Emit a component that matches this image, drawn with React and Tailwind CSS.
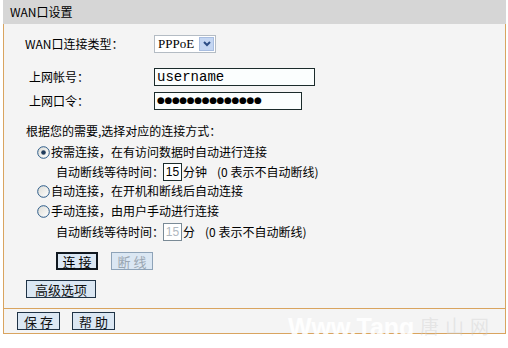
import React from 'react';

const font = { fontFamily: '"Noto Sans CJK SC", "Liberation Sans", sans-serif' };

const Radio = ({ checked }) => (
    <svg width="13" height="13" viewBox="0 0 13 13" className="shrink-0">
        <defs>
            <linearGradient id="rg" x1="0" y1="0" x2="1" y2="1">
                <stop offset="0" stopColor="#dcdcd6" />
                <stop offset="1" stopColor="#ffffff" />
            </linearGradient>
        </defs>
        <circle cx="6.5" cy="6.5" r="5.8" fill="url(#rg)" stroke="#2a5a88" strokeWidth="1" />
        {checked && <circle cx="6.5" cy="6.5" r="2.3" fill="#1f3b5c" />}
    </svg>
);

const Btn = ({ children, w, focus, disabled }) => (
    <div
        className={`flex items-center justify-center h-[18px] bg-[#dbe7f3] text-[13px] leading-none whitespace-nowrap ${focus ? 'border-2 border-[#101820]' : disabled ? 'border border-[#8ea3b8] text-[#9aa6b2]' : 'border border-[#1f3346] text-[#101010]'}`}
        style={{ width: w }}
    >
        {children}
    </div>
);

const Wait = ({ unit, disabled, mt }) => (
    <div className={`h-[18px] flex items-center pl-[52px] whitespace-nowrap ${mt}`}>
        <span className="w-[107px] shrink-0">自动断线等待时间：</span>
        <div
            className={`w-[19px] h-[18px] shrink-0 bg-white border flex items-center justify-center text-[12px] ${disabled ? 'border-[#7a8a96] text-[#b0b8c0]' : 'border-[#1b2b2b]'}`}
            style={{ fontFamily: '"Liberation Sans", sans-serif' }}
        >
            15
        </div>
        <span className="ml-[1px]">{unit}</span>
        <span className="ml-[10px]">(0 表示不自动断线)</span>
    </div>
);

export default function App() {
    return (
        <div className="w-[508px] h-[348px] bg-white relative overflow-hidden text-[12px] text-black" style={font}>
            <div className="ml-[3px] w-[503px]">
                {/* Header */}
                <div className="h-[24px] bg-[#d6d6d6] flex items-center pl-[7px] text-[12px]">
                    WAN口设置
                </div>

                {/* Body */}
                <div className="h-[284px] bg-[#f4f4f4] border-l border-r border-[#d9a45f] pt-[11px] whitespace-nowrap">
                    <div className="flex items-center h-[18px] pl-[21px]">
                        <div className="w-[129px] shrink-0">WAN口连接类型：</div>
                        <div className="w-[62px] h-[18px] bg-white border border-[#b4bcc4] flex items-center justify-between pl-[3px] pr-[1px]">
                            <span className="text-[13px]" style={{ fontFamily: '"Liberation Serif", serif' }}>PPPoE</span>
                            <div className="w-[15px] h-[14px] bg-[#c4d6f2] border border-[#a8bde0] flex items-center justify-center">
                                <svg width="8" height="6" viewBox="0 0 8 6"><path d="M1 1 L4 4 L7 1" fill="none" stroke="#2c4d85" strokeWidth="2" /></svg>
                            </div>
                        </div>
                    </div>

                    <div className="flex items-center h-[18px] pl-[25px] mt-[15px]">
                        <div className="w-[125px] shrink-0">上网帐号：</div>
                        <div className="w-[161px] h-[18px] bg-[#fbfefe] border border-[#1b2b2b] flex items-center pl-[2px] text-[14px]" style={{ fontFamily: '"Liberation Mono", monospace' }}>
                            username
                        </div>
                    </div>

                    <div className="flex items-center h-[18px] pl-[25px] mt-[6px]">
                        <div className="w-[125px] shrink-0">上网口令：</div>
                        <div className="w-[148px] h-[18px] bg-[#fbfefe] border border-[#1b2b2b] flex items-center pl-[2px] text-[9px] tracking-[-0.4px]" style={{ fontFamily: '"DejaVu Sans", sans-serif' }}>
                            ●●●●●●●●●●●●●●
                        </div>
                    </div>

                    <div className="h-[18px] flex items-center pl-[22px] mt-[12px]">根据您的需要,选择对应的连接方式：</div>

                    <div className="h-[18px] flex items-center pl-[33px] mt-[3px] gap-[1px]">
                        <Radio checked />
                        <span>按需连接，在有访问数据时自动进行连接</span>
                    </div>

                    <Wait unit="分钟" mt="mt-[2px]" />

                    <div className="h-[18px] flex items-center pl-[33px] mt-[1px] gap-[1px]">
                        <Radio />
                        <span>自动连接，在开机和断线后自动连接</span>
                    </div>

                    <div className="h-[18px] flex items-center pl-[33px] mt-[2px] gap-[1px]">
                        <Radio />
                        <span>手动连接，由用户手动进行连接</span>
                    </div>

                    <Wait unit="分" disabled mt="mt-[3px]" />

                    <div className="flex items-center pl-[52px] mt-[11px] gap-[13px]">
                        <Btn w={42} focus>连 接</Btn>
                        <Btn w={42} disabled>断 线</Btn>
                    </div>

                    <div className="pl-[22px] mt-[10px]">
                        <Btn w={70}>高级选项</Btn>
                    </div>
                </div>

                {/* Footer */}
                <div className="h-[26px] bg-[#f4f4f4] border border-[#d9a45f] flex items-center pl-[13px] gap-[12px]">
                    <Btn w={43}>保 存</Btn>
                    <Btn w={43}>帮 助</Btn>
                </div>
            </div>

            {/* watermark */}
            <div className="absolute left-[288px] top-[309px] text-[25px] font-bold text-white/90" style={{ fontFamily: '"Liberation Sans", sans-serif' }}>
                Www.Tang
            </div>
            <div className="absolute left-[420px] top-[312px] text-[19px] text-[#cccccc]/40 tracking-[6px]" style={font}>
                唐山网
            </div>
        </div>
    );
}
